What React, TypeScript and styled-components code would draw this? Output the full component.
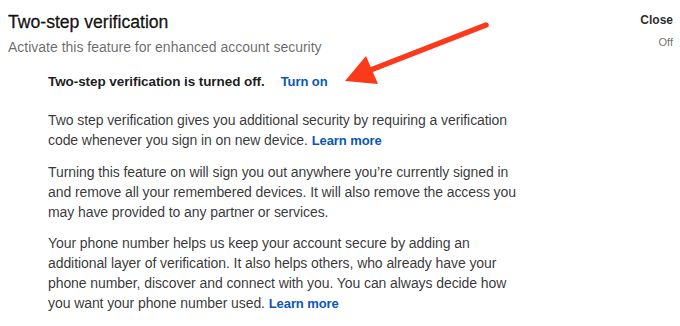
import React from "react";
import styled, { createGlobalStyle } from "styled-components";

const GlobalStyle = createGlobalStyle`
  html, body {
    margin: 0;
    padding: 0;
    background: #ffffff;
  }
  body {
    font-family: "Liberation Sans", Arial, sans-serif;
    -webkit-font-smoothing: antialiased;
  }
`;

const Page = styled.div`
  position: relative;
  width: 680px;
  height: 326px;
  box-sizing: border-box;
  padding: 11px 7px 0 8px;
  overflow: hidden;
`;

const Header = styled.header`
  display: flex;
  justify-content: space-between;
  align-items: flex-start;
`;

const TitleBlock = styled.div`
  display: flex;
  flex-direction: column;
  gap: 4px;
`;

const Title = styled.h1`
  margin: 0;
  font-size: 17.6px;
  line-height: 22px;
  font-weight: 400;
  color: rgba(0, 0, 0, 0.92);
  -webkit-text-stroke: 0.3px rgba(0, 0, 0, 0.92);
`;

const Subtitle = styled.p`
  margin: 0;
  font-size: 14px;
  line-height: 20px;
  color: rgba(0, 0, 0, 0.6);
`;

const SideBlock = styled.div`
  display: flex;
  flex-direction: column;
  align-items: flex-end;
  gap: 7px;
  padding-top: 1px;
`;

const CloseButton = styled.button`
  border: 0;
  background: none;
  padding: 0;
  margin: 0;
  font-family: inherit;
  font-size: 12px;
  line-height: 16px;
  font-weight: 700;
  color: rgba(0, 0, 0, 0.85);
  cursor: pointer;
`;

const StateLabel = styled.span`
  font-size: 11px;
  line-height: 14px;
  color: rgba(0, 0, 0, 0.6);
`;

const Body = styled.section`
  padding-left: 40px;
  margin-top: 15px;
  width: 476px;
  letter-spacing: -0.08px;
`;

const StatusRow = styled.div`
  display: flex;
  align-items: baseline;
  gap: 16px;
  margin-bottom: 18px;
`;

const StatusText = styled.span`
  font-size: 13.5px;
  line-height: 20px;
  font-weight: 700;
  color: rgba(0, 0, 0, 0.9);
`;

const Link = styled.a`
  color: #0a57b8;
  font-size: 13px;
  font-weight: 700;
  text-decoration: none;
  cursor: pointer;
`;

const TurnOn = styled(Link)`
  line-height: 20px;
`;

const Paragraph = styled.p`
  margin: 0 0 11px;
  font-size: 14px;
  line-height: 20px;
  color: rgba(0, 0, 0, 0.8);
`;

const ArrowSvg = styled.svg`
  position: absolute;
  left: 0;
  top: 0;
  pointer-events: none;
`;

function Arrow() {
  return (
    <ArrowSvg width="680" height="326" viewBox="0 0 680 326">
      <line
        x1="486"
        y1="25"
        x2="368"
        y2="71"
        stroke="#fb3a1c"
        strokeWidth="5.5"
        strokeLinecap="round"
      />
      <polygon points="345,81 366,56 378,84" fill="#fb3a1c" />
    </ArrowSvg>
  );
}

export default function App() {
  return (
    <>
      <GlobalStyle />
      <Page>
        <Header>
          <TitleBlock>
            <Title>Two-step verification</Title>
            <Subtitle>Activate this feature for enhanced account security</Subtitle>
          </TitleBlock>
          <SideBlock>
            <CloseButton>Close</CloseButton>
            <StateLabel>Off</StateLabel>
          </SideBlock>
        </Header>
        <Body>
          <StatusRow>
            <StatusText>Two-step verification is turned off.</StatusText>
            <TurnOn>Turn on</TurnOn>
          </StatusRow>
          <Paragraph>
            Two step verification gives you additional security by requiring a
            verification code whenever you sign in on new device.{" "}
            <Link>Learn more</Link>
          </Paragraph>
          <Paragraph>
            Turning this feature on will sign you out anywhere you’re currently
            signed in and remove all your remembered devices. It will also remove
            the access you may have provided to any partner or services.
          </Paragraph>
          <Paragraph>
            Your phone number helps us keep your account secure by adding an
            additional layer of verification. It also helps others, who already
            have your phone number, discover and connect with you. You can always
            decide how you want your phone number used. <Link>Learn more</Link>
          </Paragraph>
        </Body>
        <Arrow />
      </Page>
    </>
  );
}
